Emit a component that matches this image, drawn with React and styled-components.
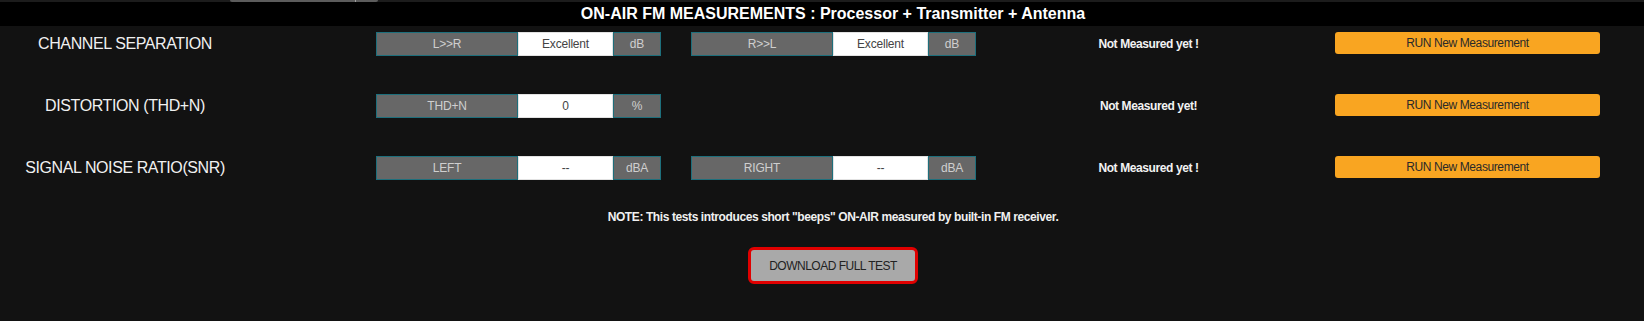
import styled, { createGlobalStyle } from "styled-components";

const GlobalStyle = createGlobalStyle`
  html, body {
    margin: 0;
    padding: 0;
    background: #121212;
    overflow: hidden;
  }
  body {
    font-family: "Liberation Sans", Arial, sans-serif;
    color: #eee;
  }
`;

const Page = styled.div`
  width: 1644px;
  height: 321px;
  background: #121212;
`;

const TopStrip = styled.div`
  height: 2px;
  background: #1c1c1c;
  display: flex;
  padding-left: 230px;
`;

const TabPiece = styled.div`
  width: ${(props) => props.w}px;
  height: 2px;
  background: #5c5c5c;
  border-radius: ${(props) => props.radius || "0"};
`;

const TabDivider = styled.div`
  width: 1px;
  height: 2px;
  background: #a0a0a0;
`;

const TitleBar = styled.div`
  height: 24px;
  background: #000;
  display: flex;
  align-items: center;
  justify-content: center;
  padding-left: 22px;
  font-size: 16px;
  font-weight: bold;
  color: #fff;
`;

const Table = styled.div`
  display: flex;
  flex-direction: column;
  gap: 38px;
  padding-top: 6px;
`;

const Row = styled.div`
  display: flex;
  align-items: center;
  height: 24px;
`;

const RowLabel = styled.div`
  width: 250px;
  text-align: center;
  font-size: 16px;
  letter-spacing: -0.4px;
  color: #f0f0f0;
`;

const Group = styled.div`
  display: flex;
  width: 285px;
  height: 24px;
  margin-left: ${(props) => props.offset}px;
`;

const Cell = styled.div`
  box-sizing: border-box;
  width: ${(props) => props.w}px;
  height: 24px;
  display: flex;
  align-items: center;
  justify-content: center;
  font-size: 12px;
  letter-spacing: -0.2px;
  background: ${(props) => (props.value ? "#fff" : "#676767")};
  color: ${(props) => (props.value ? "#444" : "#cfcfcf")};
  border: 1px solid ${(props) => (props.value ? "#e2e2e2" : "#1d6f7c")};
`;

const Status = styled.div`
  width: 345px;
  text-align: center;
  font-size: 12px;
  font-weight: bold;
  letter-spacing: -0.4px;
  color: #f2f2f2;
  margin-left: ${(props) => props.offset}px;
`;

const RunButton = styled.button`
  width: 265px;
  height: 22px;
  margin-left: 14px;
  margin-top: -2px;
  background: #f9a521;
  border: none;
  border-radius: 3px;
  font-family: "Liberation Sans", Arial, sans-serif;
  font-size: 12px;
  letter-spacing: -0.4px;
  color: #2a2a2a;
  padding: 0;
`;

const Note = styled.div`
  margin-top: 30px;
  padding-left: 22px;
  text-align: center;
  font-size: 12px;
  line-height: 14px;
  font-weight: bold;
  letter-spacing: -0.4px;
  color: #f0f0f0;
`;

const DownloadRow = styled.div`
  display: flex;
  justify-content: center;
  padding-left: 22px;
  margin-top: 23px;
`;

const DownloadButton = styled.button`
  box-sizing: border-box;
  width: 170px;
  height: 37px;
  background: #a9a9a9;
  border: 3px solid #e00000;
  border-radius: 6px;
  font-family: "Liberation Sans", Arial, sans-serif;
  font-size: 12px;
  letter-spacing: -0.5px;
  color: #222;
`;

const measurements = [
  {
    name: "CHANNEL SEPARATION",
    groups: [
      { label: "L>>R", value: "Excellent", unit: "dB" },
      { label: "R>>L", value: "Excellent", unit: "dB" },
    ],
    status: "Not Measured yet !",
  },
  {
    name: "DISTORTION (THD+N)",
    groups: [{ label: "THD+N", value: "0", unit: "%" }],
    status: "Not Measured yet!",
  },
  {
    name: "SIGNAL NOISE RATIO(SNR)",
    groups: [
      { label: "LEFT", value: "--", unit: "dBA" },
      { label: "RIGHT", value: "--", unit: "dBA" },
    ],
    status: "Not Measured yet !",
  },
];

const App = () => {
  return (
    <Page>
      <GlobalStyle />
      <TopStrip>
        <TabPiece w={125} radius="0 0 0 2px" />
        <TabDivider />
        <TabPiece w={22} radius="0 0 2px 0" />
      </TopStrip>
      <TitleBar>ON-AIR FM MEASUREMENTS : Processor + Transmitter + Antenna</TitleBar>
      <Table>
        {measurements.map((m) => (
          <Row key={m.name}>
            <RowLabel>{m.name}</RowLabel>
            {m.groups.map((g, i) => (
              <Group key={g.label} offset={i === 0 ? 126 : 30}>
                <Cell w={142}>{g.label}</Cell>
                <Cell w={95} value>
                  {g.value}
                </Cell>
                <Cell w={48}>{g.unit}</Cell>
              </Group>
            ))}
            <Status offset={m.groups.length === 1 ? 315 : 0}>{m.status}</Status>
            <RunButton>RUN New Measurement</RunButton>
          </Row>
        ))}
      </Table>
      <Note>
        NOTE: This tests introduces short "beeps" ON-AIR measured by built-in FM receiver.
      </Note>
      <DownloadRow>
        <DownloadButton>DOWNLOAD FULL TEST</DownloadButton>
      </DownloadRow>
    </Page>
  );
};

export default App;
